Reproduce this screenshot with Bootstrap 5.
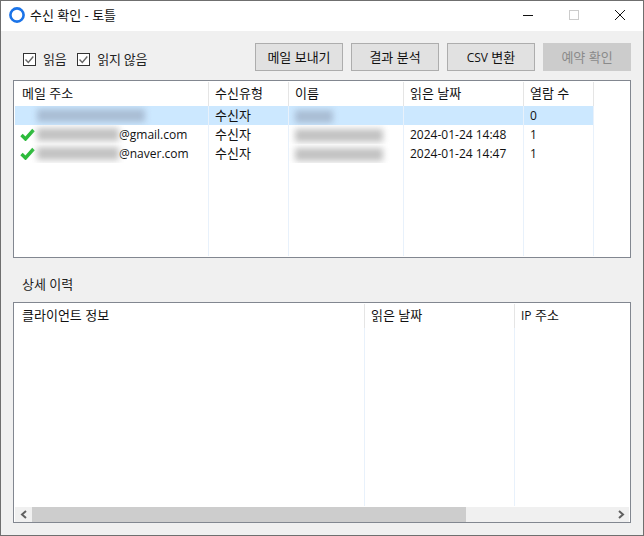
<!DOCTYPE html>
<html lang="ko">
<head>
<meta charset="utf-8">
<title>수신 확인 - 토틀</title>
<link href="https://cdn.jsdelivr.net/npm/bootstrap@5.3.0/dist/css/bootstrap.min.css" rel="stylesheet">
<style>
html,body{margin:0;height:536px;overflow:hidden;background:#f0f0f0}
body{font-family:"Open Sans","Noto Sans CJK KR",sans-serif;font-size:13px;color:#111;line-height:19px}
.lat{font-size:12px}
.win{width:644px;height:536px;border:1px solid #6f6f6f;background:#f0f0f0}
.titlebar{height:30px;background:#fff;padding:0 0 2px 8px}
.appicon{width:16px;height:16px;margin-right:5px}
.wctl{width:46px;height:28px}
.tools{height:49px;padding:12px 12px 0 22px}
.tbtn{width:88px;height:28px;padding:0;border:1px solid #adadad;border-radius:0;background:#e1e1e1;color:#111;font-size:13px;line-height:24px}
.tbtn:disabled{background:#ccc;border-color:#ccc;color:#8a8a8a;opacity:1}
.chkrow{padding-top:7px}
.chk{margin:0 11px 0 0;min-height:0;padding:0}
.chk .form-check-input{float:none;margin:0 7px 0 0;width:13px;height:13px;border:1px solid #333;border-radius:0;background-color:#fff;background-size:13px 13px;background-image:url("data:image/svg+xml,%3Csvg xmlns='http://www.w3.org/2000/svg' viewBox='0 0 13 13'%3E%3Cpath d='M2.5 6.5l2.8 3 5-6' fill='none' stroke='%23666' stroke-width='1.4'/%3E%3C/svg%3E");box-shadow:none;vertical-align:-2px}
.chk .form-check-label{color:#222;letter-spacing:-.3px}
.lst{margin:0 12px;border:1px solid #828790;background:#fff;padding:1px}
.lst-a{height:178px}
.lst-b{height:221px}
.grid{table-layout:fixed;width:615px;height:100%;margin:0;--bs-table-bg:transparent;border-collapse:separate;border-spacing:0}
.grid th,.grid td{padding:0 0 0 6px;border:0;font-weight:400;font-size:13px;line-height:19px;color:#111;white-space:nowrap;overflow:hidden;background:transparent;box-shadow:none}
.grid th{height:24px;border-right:1px solid #e5e5e5;vertical-align:middle;padding-bottom:2px}
.grid td{height:19px;border-right:1px solid #e8f1fb;vertical-align:middle}
.grid td.lat{font-size:12px}
.grid th:first-child,.grid td:first-child{padding-left:7px}
.grid .endc{border-right:0}
.grid tr.sel td{background:#cce8ff}
.grid tr.sel td.endc{background:#fff}
.grid tr.fill td{height:auto}
.addr{height:19px}
.tick{width:15px;height:13px;margin-left:-2px;margin-right:2px;flex:none}
.smear{display:inline-block;height:13px;background:#c2c2c2;filter:blur(3px);flex:none;vertical-align:middle}
.smear-blue{background:#a9bdd4}
.hdg{height:44px;padding:17px 0 0 21px;color:#222}
.lst-b .grid{height:202px}
.sbar{height:15px;margin-top:1px;width:614px;background:#f0f0f0}
.sbtn{width:17px;height:15px}
.thumb{width:434px;height:15px;background:#cdcdcd}
.trk{height:15px}
</style>
</head>
<body>
<div class="win d-flex flex-column">
  <div class="titlebar d-flex align-items-center">
    <svg class="appicon" viewBox="0 0 16 16"><circle cx="8" cy="8" r="6.6" fill="none" stroke="#1a73e8" stroke-width="2.6"/></svg>
    <span class="flex-grow-1">수신 확인 - 토틀</span>
    <div class="wctl d-flex align-items-center justify-content-center"><svg width="12" height="12" viewBox="0 0 12 12"><path d="M1 6.5h10" stroke="#111" fill="none"/></svg></div>
    <div class="wctl d-flex align-items-center justify-content-center"><svg width="12" height="12" viewBox="0 0 12 12"><rect x="1.5" y="1.5" width="9" height="9" fill="none" stroke="#ccc"/></svg></div>
    <div class="wctl d-flex align-items-center justify-content-center"><svg width="12" height="12" viewBox="0 0 12 12"><path d="M1 1l10 10M11 1L1 11" stroke="#111" fill="none"/></svg></div>
  </div>
  <div class="tools d-flex align-items-start">
    <div class="chkrow d-flex align-items-center flex-grow-1">
      <div class="form-check chk"><input class="form-check-input" type="checkbox" checked id="c1"><label class="form-check-label" for="c1">읽음</label></div>
      <div class="form-check chk"><input class="form-check-input" type="checkbox" checked id="c2"><label class="form-check-label" for="c2">읽지 않음</label></div>
    </div>
    <div class="d-flex gap-2">
      <button class="btn tbtn" type="button">메일 보내기</button>
      <button class="btn tbtn" type="button">결과 분석</button>
      <button class="btn tbtn" type="button"><span class="lat">CSV</span> 변환</button>
      <button class="btn tbtn" type="button" disabled>예약 확인</button>
    </div>
  </div>
  <div class="lst lst-a">
    <table class="table grid">
      <colgroup><col style="width:194px"><col style="width:80px"><col style="width:115px"><col style="width:120px"><col style="width:70px"><col></colgroup>
      <thead><tr><th>메일 주소</th><th>수신유형</th><th>이름</th><th>읽은 날짜</th><th>열람 수</th><th class="endc"></th></tr></thead>
      <tbody>
        <tr class="sel"><td><div class="addr d-flex align-items-center"><span class="tick"></span><span class="smear smear-blue" style="width:108px"></span></div></td><td>수신자</td><td><span class="smear smear-blue" style="width:38px"></span></td><td></td><td class="lat">0</td><td class="endc"></td></tr>
        <tr><td><div class="addr d-flex align-items-center"><svg class="tick" viewBox="0 0 15 13"><path d="M1.5 7l4 4 8-9" fill="none" stroke="#2dbb3c" stroke-width="3.4"/></svg><span class="smear" style="width:82px"></span><span class="lat">@gmail.com</span></div></td><td>수신자</td><td><span class="smear" style="width:88px"></span></td><td class="lat">2024-01-24 14:48</td><td class="lat">1</td><td class="endc"></td></tr>
        <tr><td><div class="addr d-flex align-items-center"><svg class="tick" viewBox="0 0 15 13"><path d="M1.5 7l4 4 8-9" fill="none" stroke="#2dbb3c" stroke-width="3.4"/></svg><span class="smear" style="width:82px"></span><span class="lat">@naver.com</span></div></td><td>수신자</td><td><span class="smear" style="width:88px"></span></td><td class="lat">2024-01-24 14:47</td><td class="lat">1</td><td class="endc"></td></tr>
        <tr class="fill"><td></td><td></td><td></td><td></td><td></td><td class="endc"></td></tr>
      </tbody>
    </table>
  </div>
  <div class="hdg">상세 이력</div>
  <div class="lst lst-b">
    <table class="table grid">
      <colgroup><col style="width:350px"><col style="width:150px"><col></colgroup>
      <thead><tr><th>클라이언트 정보</th><th>읽은 날짜</th><th class="endc"><span class="lat">IP</span> 주소</th></tr></thead>
      <tbody><tr class="fill"><td></td><td></td><td class="endc"></td></tr></tbody>
    </table>
    <div class="sbar d-flex">
      <div class="sbtn d-flex align-items-center justify-content-center"><svg width="8" height="9" viewBox="0 0 8 9"><path d="M6 1L2 4.5 6 8" fill="none" stroke="#606060" stroke-width="2"/></svg></div>
      <div class="thumb"></div>
      <div class="trk flex-grow-1"></div>
      <div class="sbtn d-flex align-items-center justify-content-center"><svg width="8" height="9" viewBox="0 0 8 9"><path d="M2 1l4 3.5L2 8" fill="none" stroke="#606060" stroke-width="2"/></svg></div>
    </div>
  </div>
</div>
</body>
</html>
